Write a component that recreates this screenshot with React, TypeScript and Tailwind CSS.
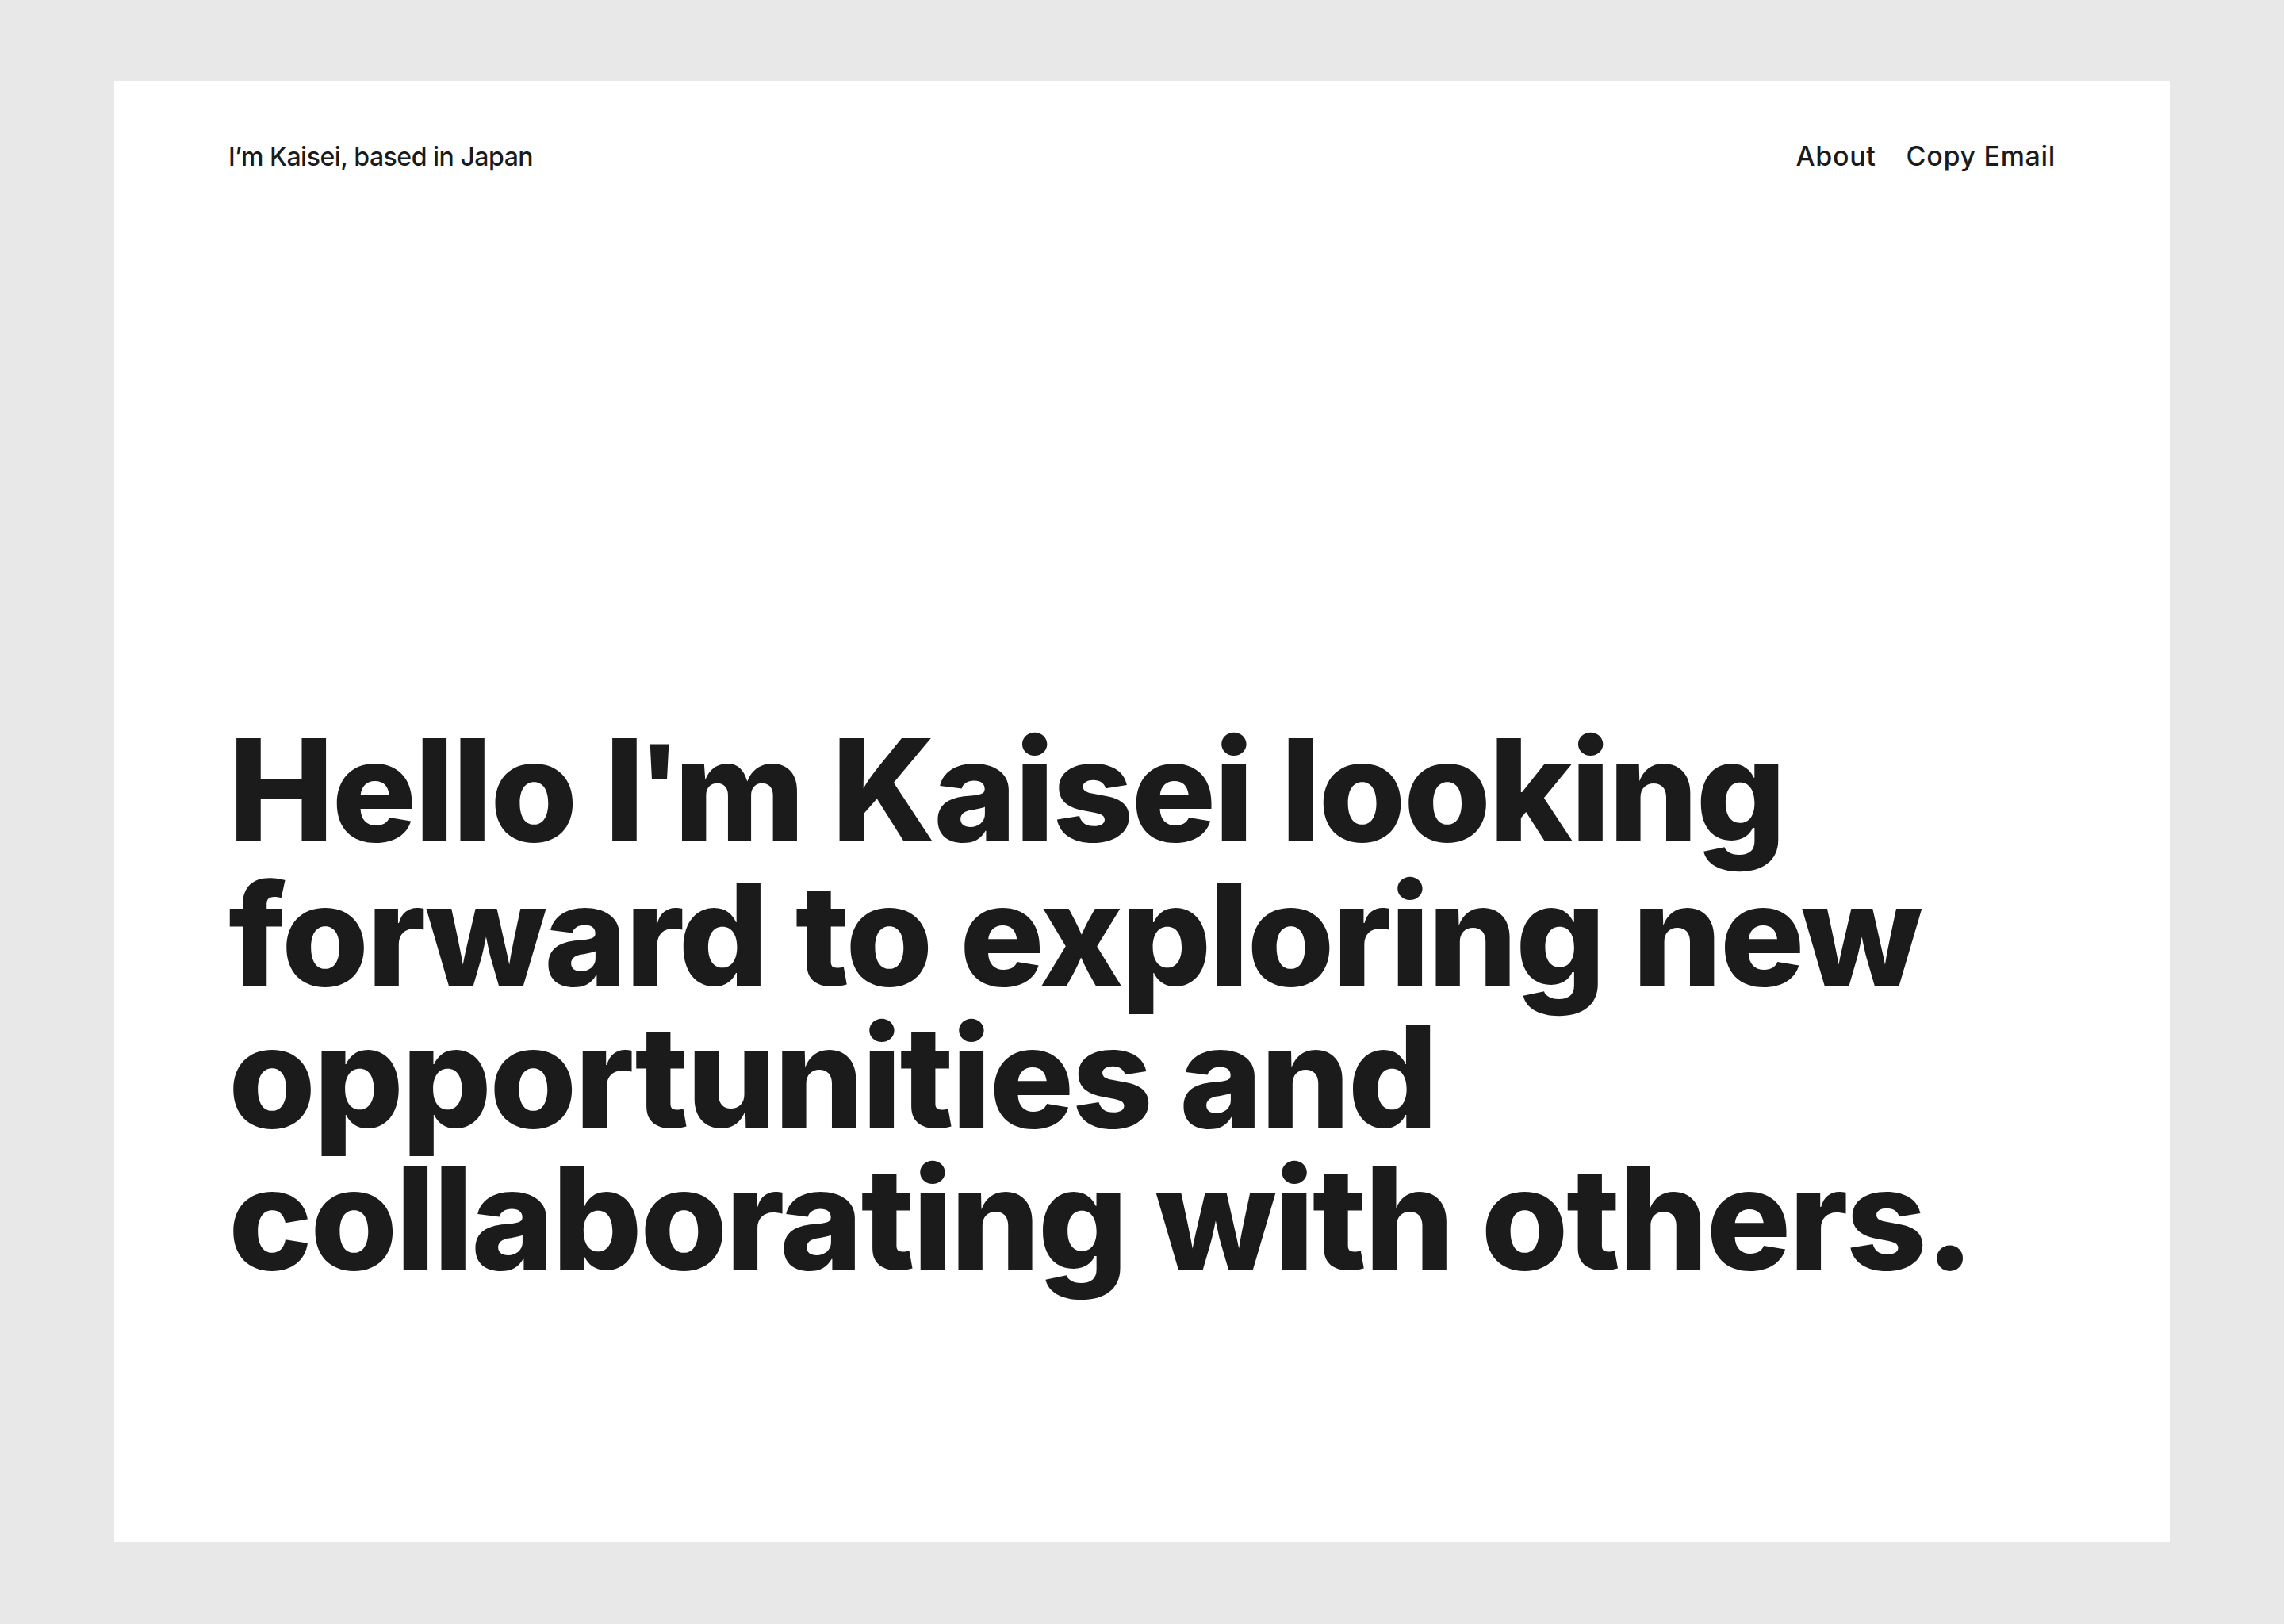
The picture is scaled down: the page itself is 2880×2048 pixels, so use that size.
import React from 'react'

const Nav = () => {
  return (
    <header className="flex items-baseline justify-between font-['Inter','Liberation_Sans',sans-serif] leading-none font-medium text-[#1b1b1b]">
      <p className="text-[32px] tracking-[-0.015em]">I’m Kaisei, based in Japan</p>
      <nav className="flex items-baseline gap-[38px] text-[34px] tracking-[0.02em]">
        <a href="#about">About</a>
        <a href="#email">Copy Email</a>
      </nav>
    </header>
  )
}

const App = () => {
  return (
    <main className="h-screen w-full bg-[#e8e8e8] px-[144px] pt-[102px] pb-[104px]">
      <section className="flex h-full flex-col bg-white px-[144px] pt-[78px] pb-[318px]">
        <Nav />
        {/* Headline */}
        <h1 className="mt-auto font-['Inter','Liberation_Sans',sans-serif] text-[178px] leading-[179px] font-extrabold tracking-[-0.015em] text-[#1b1b1b]">
          Hello I<span className="font-['Liberation_Sans',sans-serif] font-bold">'</span>m Kaisei looking
          <br />
          forward to exploring new
          <br />
          opportunities and
          <br />
          collaborating with others.
        </h1>
      </section>
    </main>
  )
}

export default App
